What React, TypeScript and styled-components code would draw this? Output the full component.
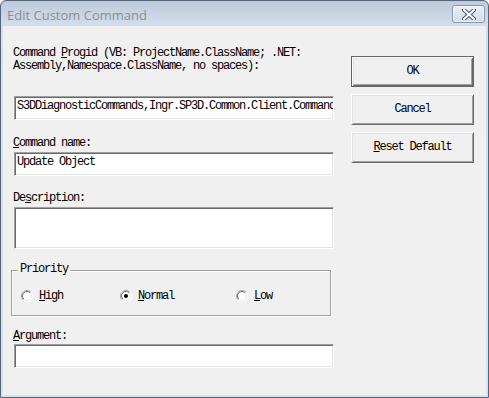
import React from "react";
import styled, { createGlobalStyle } from "styled-components";

const GlobalStyle = createGlobalStyle`
  html, body { margin: 0; padding: 0; background: #ffffff; }
  * { box-sizing: border-box; }
`;

const mono = `"Liberation Mono", "DejaVu Sans Mono", monospace`;

const Window = styled.div`
  width: 489px;
  height: 398px;
  border: 1px solid #56657a;
  border-radius: 6px 6px 0 0;
  background: linear-gradient(#bccadb 0px, #d3dfec 25px, #d6e2ef 100%);
  display: flex;
  flex-direction: column;
  overflow: hidden;
`;

const TitleBar = styled.div`
  height: 25px;
  flex: none;
  display: flex;
  justify-content: space-between;
  align-items: flex-start;
  padding: 0 3px 0 6px;
`;

const Title = styled.div`
  font-family: "Open Sans", "Noto Sans", sans-serif;
  font-size: 13px;
  line-height: 18px;
  margin-top: 5px;
  color: #8e8e8e;
`;

const CloseButton = styled.div`
  width: 33px;
  height: 18px;
  margin-top: 4px;
  border: 1px solid #8796ac;
  border-radius: 3px;
  background: linear-gradient(#e9eff6, #d2dde9);
  box-shadow: inset 0 0 0 1px rgba(255, 255, 255, 0.6);
  display: flex;
  align-items: center;
  justify-content: center;
`;

const Client = styled.div`
  flex: 1;
  margin: 0 2px 2px 2px;
  background: #f0f0f0;
  display: flex;
  align-items: flex-start;
  padding: 21px 0 0 8px;
  font-family: ${mono};
  font-size: 12px;
  letter-spacing: -1.2px;
  color: #000;
`;

const LeftCol = styled.div`
  width: 323px;
  display: flex;
  flex-direction: column;
`;

const RightCol = styled.div`
  margin-left: 17px;
  margin-top: 9px;
  display: flex;
  flex-direction: column;
  gap: 7px;
`;

const Label = styled.div<{ $top?: number }>`
  padding-left: 2px;
  line-height: 13px;
  margin-top: ${(p) => p.$top ?? 0}px;
  white-space: pre;
`;

const Key = styled.span`
  text-decoration: underline;
  text-underline-offset: 1px;
`;

const TextBox = styled.div<{ $top?: number; $height?: number }>`
  margin-left: 3px;
  margin-top: ${(p) => p.$top ?? 0}px;
  width: 320px;
  height: ${(p) => p.$height ?? 24}px;
  background: #fff;
  border-style: solid;
  border-width: 1px;
  border-color: #a0a0a0 #ffffff #ffffff #a0a0a0;
  box-shadow: inset 1px 1px 0 #696969, inset -1px -1px 0 #e3e3e3;
  padding: 2px 2px 0 2px;
  line-height: 14px;
  white-space: nowrap;
  overflow: hidden;
`;

const Group = styled.div`
  position: relative;
  margin-top: 21px;
  width: 320px;
  height: 46px;
  border: 1px solid #a0a0a0;
  box-shadow: inset 1px 1px 0 #ffffff, 1px 1px 0 #ffffff;
  display: grid;
  grid-template-columns: 99px 116px auto;
  align-items: center;
  padding: 6px 0 0 9px;
`;

const Legend = styled.span`
  position: absolute;
  left: 6px;
  top: -8px;
  padding: 0 2px;
  background: #f0f0f0;
  line-height: 13px;
`;

const Option = styled.label`
  display: flex;
  align-items: center;
  gap: 6px;
  line-height: 13px;
`;

const Button = styled.div<{ $default?: boolean }>`
  width: 123px;
  height: 31px;
  display: flex;
  align-items: center;
  justify-content: center;
  background: #f0f0f0;
  border-style: solid;
  border-width: 1px;
  border-color: ${(p) =>
    p.$default ? "#646464" : "#ffffff #696969 #696969 #ffffff"};
  box-shadow: ${(p) =>
    p.$default
      ? "inset 1px 1px 0 #ffffff, inset -1px -1px 0 #696969, inset 2px 2px 0 #e3e3e3, inset -2px -2px 0 #a0a0a0"
      : "inset 1px 1px 0 #e3e3e3, inset -1px -1px 0 #a0a0a0"};
  line-height: 13px;
`;

function Radio({ checked, id }: { checked?: boolean; id: string }) {
  return (
    <svg width="12" height="12" viewBox="0 0 12 12">
      <defs>
        <linearGradient id={`o${id}`} x1="0" y1="0" x2="1" y2="1">
          <stop offset="0.45" stopColor="#a0a0a0" />
          <stop offset="0.55" stopColor="#ffffff" />
        </linearGradient>
        <linearGradient id={`i${id}`} x1="0" y1="0" x2="1" y2="1">
          <stop offset="0.45" stopColor="#696969" />
          <stop offset="0.55" stopColor="#e3e3e3" />
        </linearGradient>
      </defs>
      <circle cx="6" cy="6" r="5.5" fill="#ffffff" stroke={`url(#o${id})`} strokeWidth="1" />
      <circle cx="6" cy="6" r="4.5" fill="#ffffff" stroke={`url(#i${id})`} strokeWidth="1" />
      {checked && <circle cx="6" cy="6" r="2" fill="#000" />}
    </svg>
  );
}

function CloseGlyph() {
  return (
    <svg width="14" height="11" viewBox="0 0 14 11">
      <path
        d="M2 1 L12 10 M12 1 L2 10"
        stroke="#4a5566"
        strokeWidth="4"
        strokeLinecap="round"
      />
      <path
        d="M2 1 L12 10 M12 1 L2 10"
        stroke="#ffffff"
        strokeWidth="2"
        strokeLinecap="round"
      />
    </svg>
  );
}

export default function App() {
  return (
    <>
      <GlobalStyle />
      <Window>
        <TitleBar>
          <Title>Edit Custom Command</Title>
          <CloseButton>
            <CloseGlyph />
          </CloseButton>
        </TitleBar>
        <Client>
          <LeftCol>
            <Label>
              Command <Key>P</Key>rogid (VB: ProjectName.ClassName; .NET:
              {"\n"}Assembly,Namespace.ClassName, no spaces):
            </Label>
            <TextBox $top={23}>
              S3DDiagnosticCommands,Ingr.SP3D.Common.Client.Commands.UpdateObject
            </TextBox>
            <Label $top={17}>
              <Key>C</Key>ommand name:
            </Label>
            <TextBox $top={2}>Update Object</TextBox>
            <Label $top={16}>
              De<Key>s</Key>cription:
            </Label>
            <TextBox $top={2} $height={42} />
            <Group>
              <Legend>Priority</Legend>
              <Option>
                <Radio id="h" />
                <span>
                  <Key>H</Key>igh
                </span>
              </Option>
              <Option>
                <Radio id="n" checked />
                <span>
                  <Key>N</Key>ormal
                </span>
              </Option>
              <Option>
                <Radio id="l" />
                <span>
                  <Key>L</Key>ow
                </span>
              </Option>
            </Group>
            <Label $top={14}>
              <Key>A</Key>rgument:
            </Label>
            <TextBox $top={1} />
          </LeftCol>
          <RightCol>
            <Button $default>OK</Button>
            <Button>Cancel</Button>
            <Button>
              <span>
                <Key>R</Key>eset Default
              </span>
            </Button>
          </RightCol>
        </Client>
      </Window>
    </>
  );
}
